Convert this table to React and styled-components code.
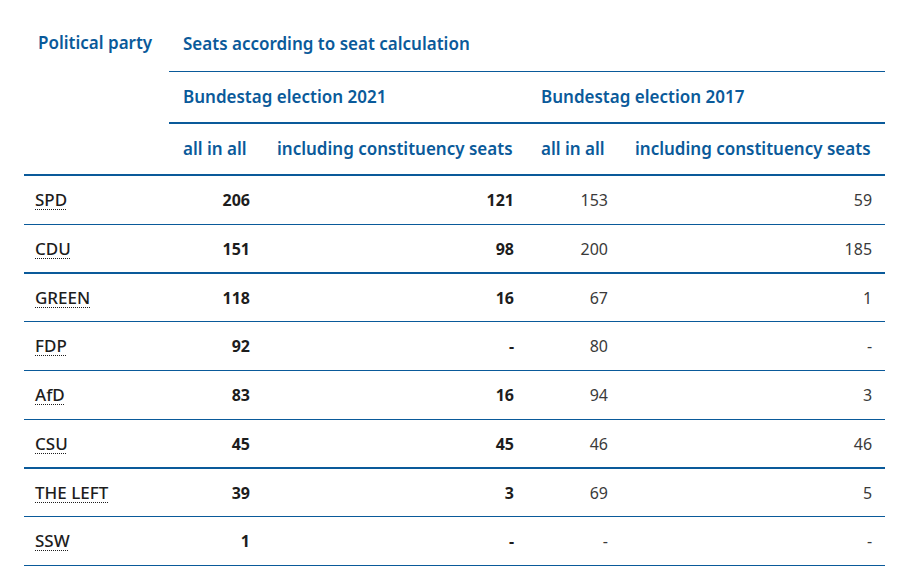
import React from "react";
import styled, { createGlobalStyle } from "styled-components";

const Global = createGlobalStyle`
  html, body { margin: 0; padding: 0; background: #fff; }
  body { font-family: "Noto Sans", "Open Sans", sans-serif; }
`;

const BLUE = "#0a5a9a";

const Page = styled.div`
  padding: 16px 38px 0 24px;
`;

const Table = styled.table`
  border-collapse: separate;
  border-spacing: 0;
  table-layout: fixed;
  width: 861px;
  font-size: 16px;
  line-height: 24px;
`;

const HeadRow = styled.tr`
  height: ${(p) => p.$h}px;
`;

const Th = styled.th`
  padding: 0 14px;
  text-align: left;
  vertical-align: ${(p) => (p.$top ? "top" : "middle")};
  padding-top: ${(p) => (p.$top ? "15px" : "0")};
  color: ${BLUE};
  font-size: 17px;
  font-weight: 600;
  white-space: nowrap;
  border-bottom: ${(p) => p.$border || 0}px solid ${BLUE};
`;

const BodyRow = styled.tr`
  height: ${(p) => p.$h}px;
  & > td {
    border-bottom: ${(p) => (p.$thick ? 2 : 1)}px solid ${BLUE};
  }
`;

const Party = styled.td`
  padding: 0 11px;
  color: #1d1d1d;
  font-size: 17px;
  font-weight: 500;
  vertical-align: middle;
`;

const Abbr = styled.abbr`
  text-decoration: underline dotted;
  text-decoration-thickness: 1px;
  text-underline-offset: 3px;
  cursor: help;
`;

const Num = styled.td`
  padding: 0 13px;
  text-align: right;
  vertical-align: middle;
  font-weight: ${(p) => (p.$bold ? 700 : 400)};
  color: ${(p) => (p.$bold ? "#1d1d1d" : "#3a3a3a")};
`;

const rows = [
  ["SPD", "206", "121", "153", "59", 49, false],
  ["CDU", "151", "98", "200", "185", 49, true],
  ["GREEN", "118", "16", "67", "1", 48, false],
  ["FDP", "92", "-", "80", "-", 49, false],
  ["AfD", "83", "16", "94", "3", 49, false],
  ["CSU", "45", "45", "46", "46", 49, true],
  ["THE LEFT", "39", "3", "69", "5", 48, false],
  ["SSW", "1", "-", "-", "-", 49, false],
];

export default function App() {
  return (
    <Page>
      <Global />
      <Table>
        <colgroup>
          <col style={{ width: 145 }} />
          <col style={{ width: 94 }} />
          <col style={{ width: 264 }} />
          <col style={{ width: 94 }} />
          <col style={{ width: 264 }} />
        </colgroup>
        <thead>
          <HeadRow $h={56}>
            <Th rowSpan={3} $top $border={2}>Political party</Th>
            <Th colSpan={4} $border={1}>Seats according to seat calculation</Th>
          </HeadRow>
          <HeadRow $h={52}>
            <Th colSpan={2} $border={2}>Bundestag election 2021</Th>
            <Th colSpan={2} $border={2}>Bundestag election 2017</Th>
          </HeadRow>
          <HeadRow $h={52}>
            <Th $border={2}>all in all</Th>
            <Th $border={2}>including constituency seats</Th>
            <Th $border={2}>all in all</Th>
            <Th $border={2}>including constituency seats</Th>
          </HeadRow>
        </thead>
        <tbody>
          {rows.map(([p, a, b, c, d, h, thick]) => (
            <BodyRow key={p} $h={h} $thick={thick}>
              <Party><Abbr>{p}</Abbr></Party>
              <Num $bold>{a}</Num>
              <Num $bold>{b}</Num>
              <Num>{c}</Num>
              <Num>{d}</Num>
            </BodyRow>
          ))}
        </tbody>
      </Table>
    </Page>
  );
}
